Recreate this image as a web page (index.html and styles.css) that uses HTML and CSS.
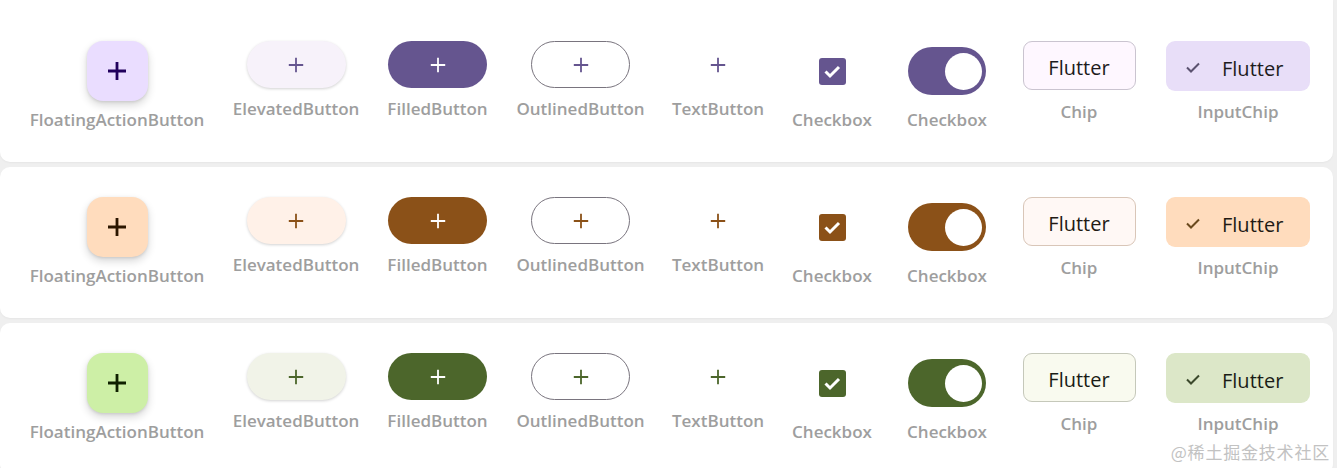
FILE: index.html
```html
<!DOCTYPE html>
<html>
<head>
<meta charset="utf-8">
<link rel="stylesheet" href="styles.css">
</head>
<body>
<div class="cards">
  <section class="card card--first theme-purple">
    <div class="item w-fab"><div class="widget tall"><div class="fab"><svg viewBox="0 0 24 24"><path d="M12 3v18M3 12h18"/></svg></div></div><div class="label">FloatingActionButton</div></div>
    <div class="item w-elev"><div class="widget"><div class="btn btn--elevated"><svg viewBox="0 0 20 20"><path d="M10 2v16M2 10h16"/></svg></div></div><div class="label l-btn">ElevatedButton</div></div>
    <div class="item w-filled"><div class="widget"><div class="btn btn--filled"><svg viewBox="0 0 20 20"><path d="M10 2v16M2 10h16"/></svg></div></div><div class="label l-btn">FilledButton</div></div>
    <div class="item w-outlined"><div class="widget"><div class="btn btn--outlined"><svg viewBox="0 0 20 20"><path d="M10 2v16M2 10h16"/></svg></div></div><div class="label l-btn">OutlinedButton</div></div>
    <div class="item w-text"><div class="widget"><div class="btn btn--text"><svg viewBox="0 0 20 20"><path d="M10 2v16M2 10h16"/></svg></div></div><div class="label l-btn">TextButton</div></div>
    <div class="item w-check"><div class="widget tall"><div class="checkbox"><svg viewBox="0 0 27 27"><path d="M6.5 13.5l4.5 4.5 9-9"/></svg></div></div><div class="label">Checkbox</div></div>
    <div class="item w-switch"><div class="widget tall"><div class="switch"><div class="thumb"></div></div></div><div class="label">Checkbox</div></div>
    <div class="item w-chip"><div class="widget chipw"><div class="chip">Flutter</div></div><div class="label l-chip">Chip</div></div>
    <div class="item w-ichip"><div class="widget chipw"><div class="chip chip--input"><svg viewBox="0 0 16 16"><path d="M2 8.5l4 4 8-8"/></svg><span>Flutter</span></div></div><div class="label l-chip">InputChip</div></div>
  </section>
  <section class="card theme-orange">
    <div class="item w-fab"><div class="widget tall"><div class="fab"><svg viewBox="0 0 24 24"><path d="M12 3v18M3 12h18"/></svg></div></div><div class="label">FloatingActionButton</div></div>
    <div class="item w-elev"><div class="widget"><div class="btn btn--elevated"><svg viewBox="0 0 20 20"><path d="M10 2v16M2 10h16"/></svg></div></div><div class="label l-btn">ElevatedButton</div></div>
    <div class="item w-filled"><div class="widget"><div class="btn btn--filled"><svg viewBox="0 0 20 20"><path d="M10 2v16M2 10h16"/></svg></div></div><div class="label l-btn">FilledButton</div></div>
    <div class="item w-outlined"><div class="widget"><div class="btn btn--outlined"><svg viewBox="0 0 20 20"><path d="M10 2v16M2 10h16"/></svg></div></div><div class="label l-btn">OutlinedButton</div></div>
    <div class="item w-text"><div class="widget"><div class="btn btn--text"><svg viewBox="0 0 20 20"><path d="M10 2v16M2 10h16"/></svg></div></div><div class="label l-btn">TextButton</div></div>
    <div class="item w-check"><div class="widget tall"><div class="checkbox"><svg viewBox="0 0 27 27"><path d="M6.5 13.5l4.5 4.5 9-9"/></svg></div></div><div class="label">Checkbox</div></div>
    <div class="item w-switch"><div class="widget tall"><div class="switch"><div class="thumb"></div></div></div><div class="label">Checkbox</div></div>
    <div class="item w-chip"><div class="widget chipw"><div class="chip">Flutter</div></div><div class="label l-chip">Chip</div></div>
    <div class="item w-ichip"><div class="widget chipw"><div class="chip chip--input"><svg viewBox="0 0 16 16"><path d="M2 8.5l4 4 8-8"/></svg><span>Flutter</span></div></div><div class="label l-chip">InputChip</div></div>
  </section>
  <section class="card theme-green">
    <div class="item w-fab"><div class="widget tall"><div class="fab"><svg viewBox="0 0 24 24"><path d="M12 3v18M3 12h18"/></svg></div></div><div class="label">FloatingActionButton</div></div>
    <div class="item w-elev"><div class="widget"><div class="btn btn--elevated"><svg viewBox="0 0 20 20"><path d="M10 2v16M2 10h16"/></svg></div></div><div class="label l-btn">ElevatedButton</div></div>
    <div class="item w-filled"><div class="widget"><div class="btn btn--filled"><svg viewBox="0 0 20 20"><path d="M10 2v16M2 10h16"/></svg></div></div><div class="label l-btn">FilledButton</div></div>
    <div class="item w-outlined"><div class="widget"><div class="btn btn--outlined"><svg viewBox="0 0 20 20"><path d="M10 2v16M2 10h16"/></svg></div></div><div class="label l-btn">OutlinedButton</div></div>
    <div class="item w-text"><div class="widget"><div class="btn btn--text"><svg viewBox="0 0 20 20"><path d="M10 2v16M2 10h16"/></svg></div></div><div class="label l-btn">TextButton</div></div>
    <div class="item w-check"><div class="widget tall"><div class="checkbox"><svg viewBox="0 0 27 27"><path d="M6.5 13.5l4.5 4.5 9-9"/></svg></div></div><div class="label">Checkbox</div></div>
    <div class="item w-switch"><div class="widget tall"><div class="switch"><div class="thumb"></div></div></div><div class="label">Checkbox</div></div>
    <div class="item w-chip"><div class="widget chipw"><div class="chip">Flutter</div></div><div class="label l-chip">Chip</div></div>
    <div class="item w-ichip"><div class="widget chipw"><div class="chip chip--input"><svg viewBox="0 0 16 16"><path d="M2 8.5l4 4 8-8"/></svg><span>Flutter</span></div></div><div class="label l-chip">InputChip</div></div>
  </section>
</div>
<div class="watermark">@稀土掘金技术社区</div>
</body>
</html>
```
FILE: styles.css
```css
html, body {
  margin: 0;
  padding: 0;
}
body {
  width: 1337px;
  height: 468px;
  overflow: hidden;
  background: #efefef;
  font-family: "Open Sans", "Noto Sans", sans-serif;
  position: relative;
}
.cards {
  display: flex;
  flex-direction: column;
  gap: 5px;
  padding-right: 4px;
}
.card {
  background: #ffffff;
  border-radius: 10px;
  height: 151px;
  box-sizing: border-box;
  padding: 30px 0 0 30px;
  display: flex;
  align-items: flex-start;
  gap: 30px;
  box-shadow: 0 1px 2px rgba(0,0,0,0.04);
}
.card--first {
  height: 162px;
  padding-top: 41px;
  border-top-left-radius: 0;
  border-top-right-radius: 0;
}
.theme-purple {
  --fab-bg: #eaddff;
  --fab-fg: #21005d;
  --elev-bg: #f7f2fa;
  --primary: #65558f;
  --chip-bg: #fef7ff;
  --chip-border: #cac4d0;
  --ichip-bg: #e8def8;
  --ichip-check: #5b5270;
  --on-surface: #1d1b20;
}
.theme-orange {
  --fab-bg: #ffdcbd;
  --fab-fg: #2c1600;
  --elev-bg: #fff1e8;
  --primary: #8b5118;
  --chip-bg: #fff8f5;
  --chip-border: #d9c6b8;
  --ichip-bg: #ffdcbd;
  --ichip-check: #6b4a1e;
  --on-surface: #221a14;
}
.theme-green {
  --fab-bg: #cdefa6;
  --fab-fg: #0f2000;
  --elev-bg: #f1f3e8;
  --primary: #4c662b;
  --chip-bg: #f9faef;
  --chip-border: #c5c8ba;
  --ichip-bg: #dce7c8;
  --ichip-check: #3c4a2c;
  --on-surface: #1a1c16;
}
.item {
  display: flex;
  flex-direction: column;
  align-items: center;
  flex: none;
}
.w-fab { width: 174px; }
.w-elev { width: 124px; }
.w-filled { width: 99px; }
.w-outlined { width: 127px; }
.w-text { width: 88px; }
.w-check { width: 80px; margin-right: 5px; }
.w-switch { width: 80px; margin-right: 5px; }
.w-chip { width: 114px; }
.w-ichip { width: 144px; }
.widget {
  display: flex;
  align-items: center;
  justify-content: center;
  height: 47px;
}
.widget.tall {
  height: 60px;
}
.widget.chipw {
  height: 50px;
  align-items: flex-start;
}
.label {
  font-size: 17px;
  font-weight: 600;
  line-height: 24px;
  color: #9e9e9e;
  margin-top: 7px;
  white-space: nowrap;
}
.label.l-btn {
  margin-top: 9px;
}
.label.l-chip {
  margin-top: 9px;
}
/* FAB */
.fab {
  width: 61px;
  height: 60px;
  border-radius: 16px;
  background: var(--fab-bg);
  display: flex;
  align-items: center;
  justify-content: center;
  box-shadow: 0 4px 8px rgba(0,0,0,0.16), 0 1px 3px rgba(0,0,0,0.10);
}
.fab svg {
  width: 24px;
  height: 24px;
  stroke: var(--fab-fg);
  stroke-width: 2.8;
  fill: none;
}
/* buttons */
.btn {
  width: 99px;
  height: 47px;
  border-radius: 24px;
  box-sizing: border-box;
  display: flex;
  align-items: center;
  justify-content: center;
}
.btn svg {
  width: 18px;
  height: 18px;
  stroke: var(--primary);
  stroke-width: 2;
  fill: none;
}
.btn--elevated {
  background: var(--elev-bg);
  box-shadow: 0 1px 3px rgba(0,0,0,0.18);
}
.btn--filled {
  background: var(--primary);
}
.btn--filled svg {
  stroke: #ffffff;
}
.btn--outlined {
  border: 1.5px solid #79747e;
  background: #fff;
}
.btn--text {
  width: 70px;
}
/* checkbox */
.checkbox {
  width: 27px;
  height: 27px;
  border-radius: 3px;
  background: var(--primary);
  display: flex;
}
.checkbox svg {
  width: 27px;
  height: 27px;
  stroke: #fff;
  stroke-width: 3;
  fill: none;
}
/* switch */
.switch {
  width: 78px;
  height: 48px;
  border-radius: 24px;
  background: var(--primary);
  display: flex;
  align-items: center;
  justify-content: flex-end;
  padding-right: 4px;
  box-sizing: border-box;
}
.thumb {
  width: 37px;
  height: 37px;
  border-radius: 50%;
  background: #fff;
}
/* chips */
.chip {
  height: 49px;
  width: 113px;
  box-sizing: border-box;
  padding-top: 4px;
  border-radius: 9px;
  border: 1.5px solid var(--chip-border);
  background: var(--chip-bg);
  color: var(--on-surface);
  font-size: 20px;
  font-weight: 500;
  display: flex;
  align-items: center;
  justify-content: center;
}
.chip--input {
  width: 144px;
  height: 50px;
  border: none;
  background: var(--ichip-bg);
  justify-content: flex-start;
  padding-left: 19px;
  gap: 21px;
}
.chip--input svg {
  width: 16px;
  height: 16px;
  stroke: var(--ichip-check);
  stroke-width: 2;
  fill: none;
  margin-top: -3px;
}
.watermark {
  position: absolute;
  right: 7px;
  bottom: 4px;
  font-family: "Noto Sans CJK SC", sans-serif;
  font-size: 17px;
  line-height: 24px;
  color: #c2c2c2;
  letter-spacing: 0.8px;
}
```
